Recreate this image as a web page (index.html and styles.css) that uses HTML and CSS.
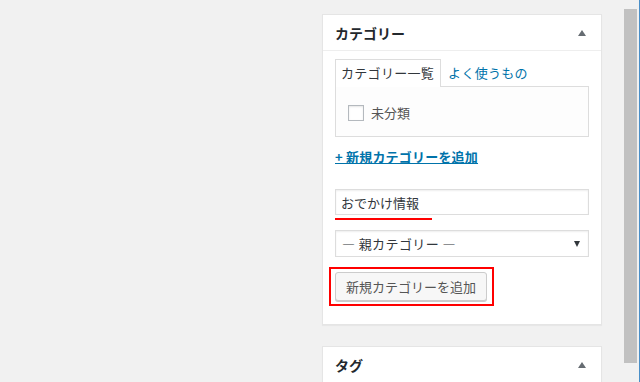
FILE: index.html
```html
<!DOCTYPE html>
<html lang="ja">
<head>
  <meta charset="UTF-8"/>
  <title>カテゴリー</title>
  <link rel="stylesheet" href="styles.css">
</head>
<body>
  <div class="page">
    <div class="main"></div>

    <!-- Sidebar boxes -->
    <div class="sidebar">
      <div class="postbox">
        <div class="postbox-header">
          <h2 class="hndle">カテゴリー</h2>
          <span class="toggle"></span>
        </div>
        <div class="inside">
          <ul class="tabs">
            <li class="tab active">カテゴリー一覧</li>
            <li class="tab">よく使うもの</li>
          </ul>
          <div class="tab-panel">
            <label class="cat-item"><span class="checkbox"></span>未分類</label>
          </div>

          <a class="add-link" href="#">+ 新規カテゴリーを追加</a>

          <div class="field">
            <input type="text" class="text-input" value="おでかけ情報">
            <span class="mark-line"></span>
          </div>

          <div class="select">
            <span>― 親カテゴリー ―</span>
            <span class="select-arrow"></span>
          </div>

          <div class="mark-box">
            <button class="button">新規カテゴリーを追加</button>
          </div>
        </div>
      </div>

      <div class="postbox">
        <div class="postbox-header">
          <h2 class="hndle">タグ</h2>
          <span class="toggle"></span>
        </div>
      </div>
    </div>

    <!-- Window scrollbar -->
    <div class="scrollbar"><div class="thumb"></div></div>
    <div class="edge"></div>
  </div>
</body>
</html>
```

FILE: styles.css
```css
/**********************************************
 *  Base
 **********************************************/
body {
  margin: 0;
  background-color: #f1f1f1;
  font-family: "Noto Sans CJK JP", "Noto Sans", sans-serif;
  font-size: 13px;
  color: #444;
  overflow: hidden;
}

h2, ul {
  margin: 0;
  padding: 0;
}

.page {
  display: flex;
  height: 382px;
}

.main {
  width: 322px;
}

/**********************************************
 *  Sidebar postboxes
 **********************************************/
.sidebar {
  width: 280px;
  padding-top: 14px;
}

.postbox {
  background-color: #fff;
  border: 1px solid #e5e5e5;
  box-shadow: 0 1px 1px rgba(0, 0, 0, 0.04);
  margin-bottom: 21px;
}

.postbox-header {
  display: flex;
  align-items: center;
  justify-content: space-between;
  height: 35px;
  padding: 0 12px;
  border-bottom: 1px solid #eee;
}

.hndle {
  font-size: 14px;
  font-weight: 600;
  color: #23282d;
}

/* small up-pointing triangle */
.toggle {
  width: 0;
  height: 0;
  border-left: 4px solid transparent;
  border-right: 4px solid transparent;
  border-bottom: 6px solid #666c72;
  margin-right: 3px;
  margin-top: 1px;
}

.inside {
  padding: 8px 12px 18px;
}

/**********************************************
 *  Tabs
 **********************************************/
.tabs {
  display: flex;
  list-style: none;
  height: 27px;
}

.tab {
  padding: 0 6px 0 7px;
  line-height: 27px;
  color: #0073aa;
  letter-spacing: 0.3px;
}

.tab.active {
  color: #32373c;
  background-color: #fff;
  border: 1px solid #ddd;
  border-bottom: none;
  line-height: 26px;
  margin-bottom: -1px;
  position: relative;
  z-index: 1;
  padding: 0 6px 0 5px;
}

.tab-panel {
  height: 49px;
  border: 1px solid #ddd;
  background-color: #fdfdfd;
  padding-left: 12px;
  display: flex;
  align-items: center;
}

.cat-item {
  display: flex;
  align-items: center;
  gap: 7px;
  color: #555;
  margin-top: 2px;
}

.checkbox {
  width: 14px;
  height: 14px;
  border: 1px solid #b4b9be;
  background-color: #fff;
  box-shadow: inset 0 1px 2px rgba(0, 0, 0, 0.1);
}

/**********************************************
 *  Add new category
 **********************************************/
.add-link {
  display: block;
  margin-top: 12px;
  line-height: 16px;
  font-weight: bold;
  color: #0073aa;
  text-decoration: underline;
  letter-spacing: 0.2px;
}

.field {
  position: relative;
  margin-top: 24px;
}

.text-input {
  display: block;
  box-sizing: border-box;
  width: 100%;
  height: 26px;
  margin: 0;
  padding: 0 5px;
  border: 1px solid #ddd;
  box-shadow: inset 0 1px 2px rgba(0, 0, 0, 0.07);
  font-family: inherit;
  font-size: 13px;
  color: #32373c;
  outline: none;
}

/* red annotation under the typed name */
.mark-line {
  position: absolute;
  left: 0;
  top: 29px;
  width: 97px;
  height: 2px;
  background-color: #f00;
}

.select {
  box-sizing: border-box;
  height: 27px;
  margin-top: 15px;
  padding: 0 8px 0 6px;
  border: 1px solid #ddd;
  box-shadow: inset 0 1px 2px rgba(0, 0, 0, 0.07);
  display: flex;
  align-items: center;
  justify-content: space-between;
  color: #32373c;
  letter-spacing: 0.4px;
}

/* small down-pointing triangle */
.select-arrow {
  width: 0;
  height: 0;
  border-left: 3px solid transparent;
  border-right: 3px solid transparent;
  border-top: 6px solid #32373c;
}

/* red annotation around the button */
.mark-box {
  display: inline-block;
  margin-top: 10px;
  margin-left: -6px;
  padding: 3px 5px 3px 4px;
  border: 2px solid #f00;
}

.button {
  display: block;
  height: 29px;
  padding: 0 10px;
  background-color: #f7f7f7;
  border: 1px solid #ccc;
  border-radius: 3px;
  box-shadow: 0 1px 0 #ccc;
  font-family: inherit;
  font-size: 13px;
  color: #555;
}

/**********************************************
 *  Scrollbar
 **********************************************/
.scrollbar {
  width: 13px;
  margin-left: 22px;
  padding-top: 9px;
}

.thumb {
  height: 354px;
  background-color: #c1c1c1;
}

.edge {
  width: 1px;
  margin-left: 2px;
  background-color: #4a8fc8;
}
```
